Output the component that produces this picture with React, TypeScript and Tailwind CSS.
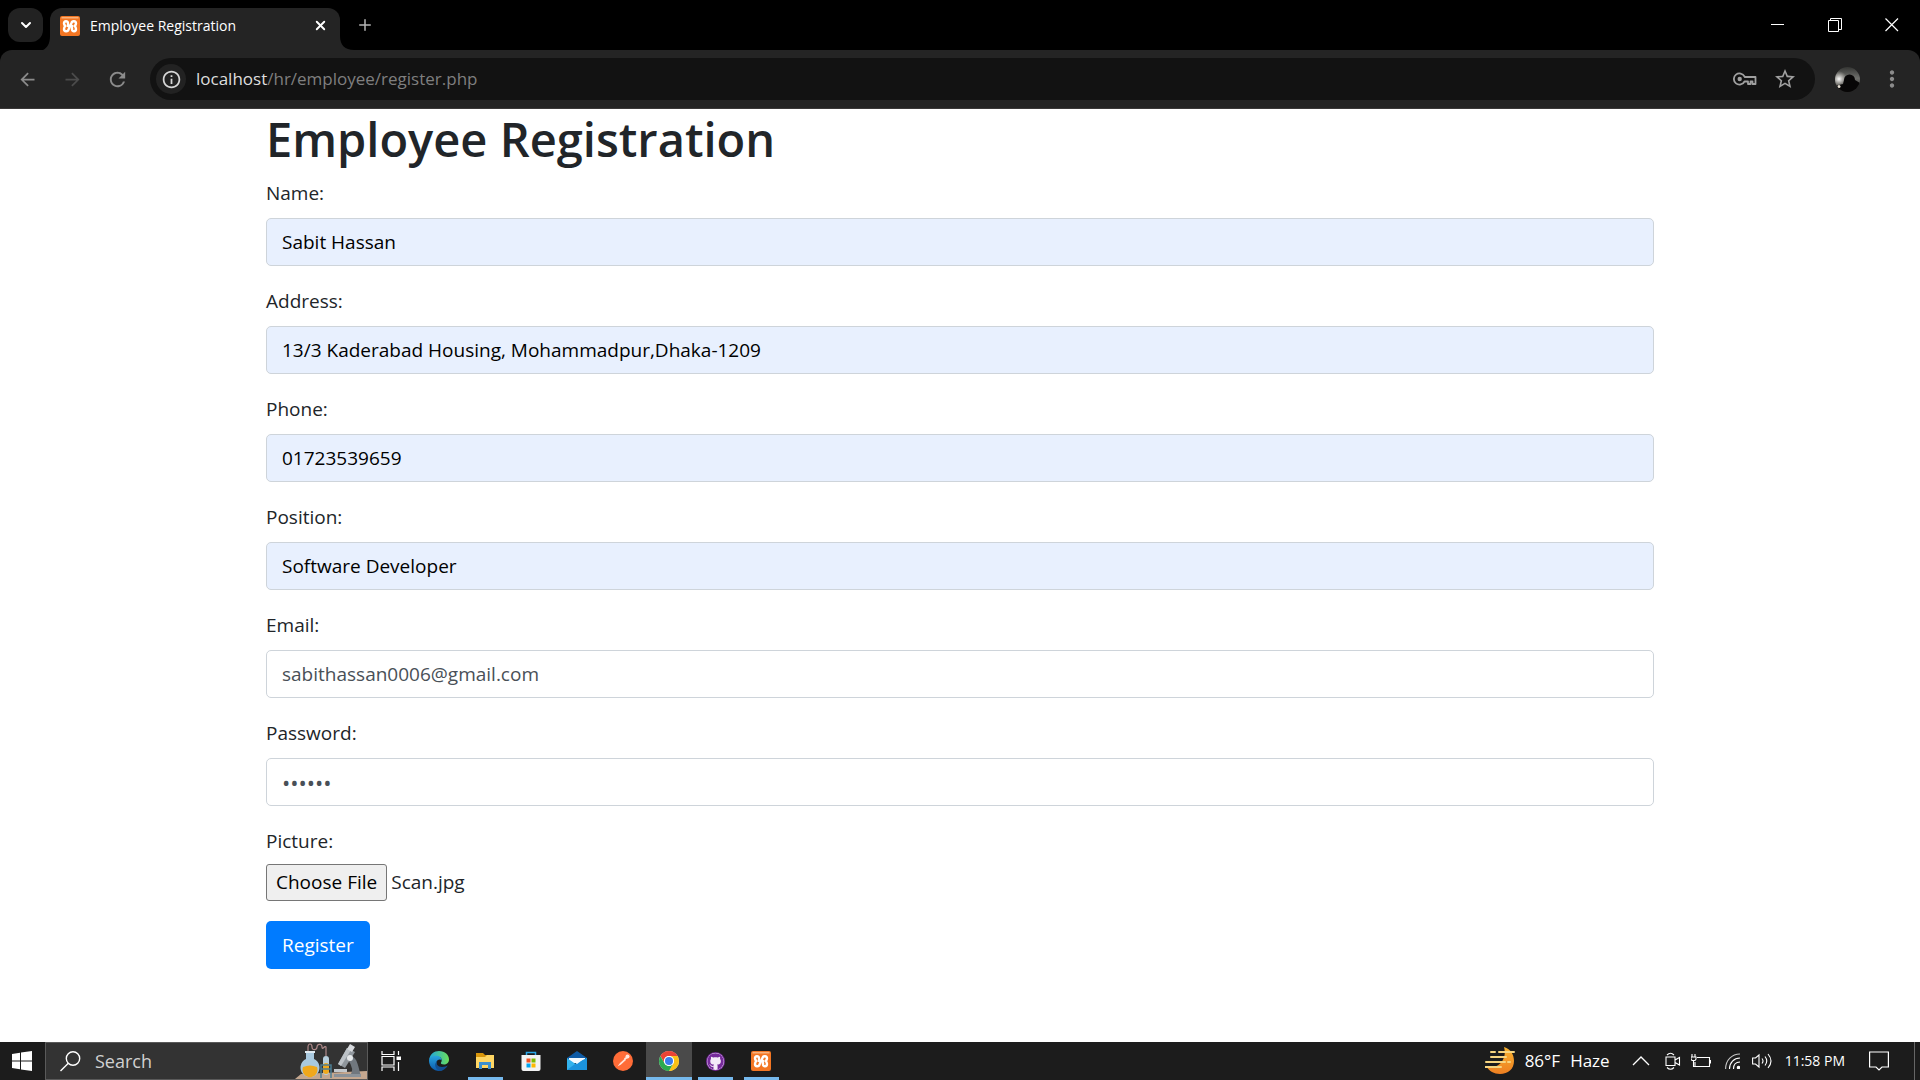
import { useEffect, useRef } from "react";
import type { ReactNode } from "react";
import { MdArrowBack, MdArrowForward, MdRefresh, MdInfoOutline, MdStarBorder, MdMoreVert } from "react-icons/md";
import { FaGithub } from "react-icons/fa";
import { ChevronDown, Plus, X } from "lucide-react";

function XamppIcon() {
  return (
    <svg width="20" height="20" viewBox="0 0 20 20" aria-hidden="true">
      <rect width="20" height="20" rx="2" fill="#f37623" />
      <path d="M1.500 1H18.500V2.500H1.500Z" fill="#f9b27c" />
      <g fill="none" stroke="#fff" strokeWidth="2.400" strokeLinecap="round" strokeLinejoin="round">
        <path d="M8 8.500V7.200C8 4.600 4 4.600 4 7.500 4 9 5.500 10 5.500 10S4 11 4 13C4 16 8 16 8.500 13.500L11.500 7C12 4.600 16 4.600 16 7.500 16 9 14.500 10 14.500 10S16 11 16 13C16 16 12 16 12 13.500V12" />
        <path d="M8 10H12" />
      </g>
    </svg>
  );
}

function TabStrip() {
  return (
    <div className="flex h-[50px] items-start bg-black pl-2">
      <button aria-label="Search tabs" className="mt-2 flex h-[34px] w-[35px] items-center justify-center rounded-xl bg-[#222222] text-white">
        <ChevronDown size={16} strokeWidth={3} />
      </button>
      <div className="flex grow">
        <div className="flex items-end">
          <svg className="mt-9 h-3.5 w-[7px]" viewBox="0 0 7 14" aria-hidden="true">
            <path d="M7 0C7 8 4 12 0 14H7Z" fill="#242424" />
          </svg>
          <div className="mt-2 flex h-[42px] w-[290px] items-center rounded-t-xl bg-[#242424] pr-2.5 pb-[7px] pl-2.5">
            <XamppIcon />
            <span className="ml-2.5 text-sm text-white">Employee Registration</span>
            <button aria-label="Close tab" className="ml-auto flex size-5 items-center justify-center text-white">
              <X size={15} strokeWidth={3} />
            </button>
          </div>
          <svg className="h-3.5 w-3.5" viewBox="0 0 14 14" aria-hidden="true">
            <path d="M0 0C0 9 5 14 14 14H0Z" fill="#242424" />
          </svg>
        </div>
        <button aria-label="New tab" className="mt-2 flex h-[34px] w-[22px] items-center justify-center text-[#b4b4b4]">
          <Plus size={18} />
        </button>
      </div>
      <div className="flex text-white">
        <button aria-label="Minimize" className="flex h-[50px] w-[57px] items-center justify-center">
          <svg width="14" height="14" viewBox="0 0 14 14"><path d="M0 6.500H13" stroke="currentColor" /></svg>
        </button>
        <button aria-label="Restore" className="flex h-[50px] w-[57px] items-center justify-center">
          <svg width="14" height="14" viewBox="0 0 14 14" fill="none" stroke="currentColor"><path d="M.5 2.500H10.500V13.500H.5ZM2.500 2.500V.5H13.500V11.500H10.500" /></svg>
        </button>
        <button aria-label="Close" className="flex h-[50px] w-[57px] items-center justify-center">
          <svg width="14" height="14" viewBox="0 0 14 14" stroke="currentColor" strokeWidth="1.200"><path d="M.5.5 13 13M13 .5.5 13" /></svg>
        </button>
      </div>
    </div>
  );
}

function Toolbar() {
  return (
    <div className="bg-black">
      <div className="flex h-[59px] items-center rounded-t-xl border-b border-[#3a3838] bg-[#242424] pl-[5px] text-[#8b8b8b]">
        <button aria-label="Back" className="flex w-[45px] justify-center"><MdArrowBack size={21} /></button>
        <button aria-label="Forward" className="flex w-[45px] justify-center text-[#4b4b4b]"><MdArrowForward size={21} /></button>
        <button aria-label="Reload" className="flex w-[45px] justify-center"><MdRefresh size={23} /></button>
        <div className="ml-2.5 flex h-[42px] grow items-center rounded-full bg-[#121212] pr-[18px] pl-1.5">
          <button aria-label="View site information" className="flex size-[30px] items-center justify-center rounded-full bg-[#222222] text-[#d6d6d6]">
            <MdInfoOutline size={21} />
          </button>
          <p className="ml-2.5 grow text-[17px] text-[#7f7f7f]">
            <span className="text-[#dedede]">localhost</span>/hr/employee/register.php
          </p>
          <button aria-label="Passwords" className="text-[#a0a0a0]">
            <svg width="24" height="14" viewBox="0 0 24 14" fill="none" stroke="currentColor" strokeWidth="1.800">
              <path d="M11.500 4.500A5.600 5.600 0 1 0 11.500 9.500H15V12H17.500V9.500H19.500V12H22.500V5H11.700Z" strokeLinejoin="round" />
              <circle cx="6.700" cy="7" r="2.200" fill="currentColor" stroke="none" />
            </svg>
          </button>
          <button aria-label="Bookmark this tab" className="ml-4 text-[#a0a0a0]"><MdStarBorder size={24} /></button>
        </div>
        <button aria-label="Profile" className="ml-5">
          <svg width="25" height="25" viewBox="0 0 25 25">
            <defs>
              <clipPath id="avatar"><circle cx="12.500" cy="12.500" r="12.500" /></clipPath>
              <linearGradient id="sky" x1="0" y1="0" x2="0" y2="1"><stop offset="0" stopColor="#343533" /><stop offset=".45" stopColor="#6f706c" /><stop offset="1" stopColor="#1a1816" /></linearGradient>
              <radialGradient id="glow"><stop offset="0" stopColor="#fff" /><stop offset="1" stopColor="#c9c5bc" stopOpacity="0" /></radialGradient>
            </defs>
            <g clipPath="url(#avatar)">
              <rect width="25" height="25" fill="url(#sky)" />
              <circle cx="4" cy="12" r="8" fill="url(#glow)" />
              <path d="M0 19 8 17 9 13A5.500 5.500 0 0 1 20 13L25 16V25H0Z" fill="#070606" />
              <circle cx="4" cy="19.500" r="1.500" fill="#e9e2d6" />
            </g>
          </svg>
        </button>
        <button aria-label="Menu" className="mr-[15px] ml-[19px]"><MdMoreVert size={26} /></button>
      </div>
    </div>
  );
}

type FieldProps = { id: string; label: string; value: string; type?: string; filled?: boolean };

function Field({ id, label, value, type = "text", filled = false }: FieldProps) {
  return (
    <div className="mb-5">
      <label htmlFor={id} className="mb-2.5 block leading-[30px]">{label}</label>
      <input
        id={id}
        type={type}
        defaultValue={value}
        className={`block h-12 w-full rounded-[5px] border border-[#ced4da] px-[15px] ${type === "password" ? "text-[22px]" : ""} ${filled ? "bg-[#e8f0fe] text-black" : "bg-white text-[#495057]"}`}
      />
    </div>
  );
}

function RegistrationForm() {
  const picture = useRef<HTMLInputElement>(null);
  useEffect(() => {
    const transfer = new DataTransfer();
    transfer.items.add(new File(["scan"], "Scan.jpg", { type: "image/jpeg" }));
    if (picture.current) picture.current.files = transfer.files;
  }, []);
  return (
    <main className="grow bg-white">
      <div className="mx-auto w-full max-w-[1388px] pb-8 text-[19px] text-[#212529]">
        <h1 className="mb-2 text-[47px] leading-[61px] font-semibold">Employee Registration</h1>
        <form onSubmit={(e) => e.preventDefault()}>
          <Field id="name" label="Name:" value="Sabit Hassan" filled />
          <Field id="address" label="Address:" value="13/3 Kaderabad Housing, Mohammadpur,Dhaka-1209" filled />
          <Field id="phone" label="Phone:" value="01723539659" filled />
          <Field id="position" label="Position:" value="Software Developer" filled />
          <Field id="email" label="Email:" type="email" value="sabithassan0006@gmail.com" />
          <Field id="password" label="Password:" type="password" value="secret" />
          <label htmlFor="picture" className="mb-2 block leading-[30px]">Picture:</label>
          <input
            ref={picture}
            id="picture"
            type="file"
            className="mb-5 block h-[37px] w-full file:mr-1 file:h-[37px] file:rounded-[3px] file:border file:border-solid file:border-[#767676] file:bg-[#efefef] file:px-[9px] file:text-black"
          />
          <button type="submit" className="h-12 rounded-[5px] bg-[#007bff] px-4 text-white">Register</button>
        </form>
      </div>
    </main>
  );
}

function TaskButton({ label, active = false, open = false, children }: { label: string; active?: boolean; open?: boolean; children: ReactNode }) {
  return (
    <button aria-label={label} className={`flex h-[38px] w-[46px] flex-col items-center ${active ? "bg-[#4a4a4a]" : ""}`}>
      <span className="flex h-[35px] items-center pt-[3px]">{children}</span>
      {(open || active) && <span className={`h-[3px] bg-[#76b9ed] ${active ? "w-full" : "w-[35px]"}`} />}
    </button>
  );
}

function SearchArt() {
  return (
    <svg className="ml-auto" width="72" height="36" viewBox="0 0 72 36" aria-hidden="true">
      <path d="M0 36 6 31 72 28V36Z" fill="#c4a78f" />
      <path d="M13 8V4C13 0 17 0 17 4S22 7 22 4 27 0 27 4 30 2 31 4V13" fill="none" stroke="#b08b8b" strokeWidth="1.200" />
      <path d="M11 8H19V16A9.500 9.500 0 1 1 11 16Z" fill="#a9c9df" />
      <path d="M8 24A7.500 7.500 0 1 0 22 24Q15 21 8 24Z" fill="#f0a81c" />
      <path d="M10 8H20V10H10Z" fill="#dfeaf1" />
      <rect x="28" y="13" width="6" height="19" rx="3" fill="#b7cfdd" />
      <rect x="28" y="20" width="6" height="11" rx="3" fill="#f0a81c" />
      <path d="M26 35V22H36V35M26 26H36" fill="none" stroke="#4c7d92" strokeWidth="1.500" />
      <path d="M52 5 60 9 50 25 43 21Z" fill="#8f969c" />
      <path d="M52 5 56 7 46 23 43 21Z" fill="#bcc2c7" />
      <path d="M55 1 60 4 57 9 52 6Z" fill="#d7dade" />
      <path d="M56 13C63 15 63 24 66 33H55Q60 26 53 17Z" fill="#70777e" />
      <circle cx="55" cy="15" r="3" fill="#e5e8ea" />
      <path d="M39 26H52V29H39Z" fill="#c3c8cc" />
      <path d="M39 31H66V34H39Z" fill="#8a9299" />
    </svg>
  );
}

function Taskbar() {
  return (
    <footer className="flex h-[38px] items-stretch bg-[#1c1c1c] text-white">
      <button aria-label="Start" className="flex w-[45px] items-center justify-center pr-px">
        <svg width="20" height="20" viewBox="0 0 20 20" fill="#fff"><path d="M0 3 8 1.800V9.500H0ZM9 1.600 20 0V9.500H9ZM0 10.500H8V18.200L0 17ZM9 10.500H20V20L9 18.400Z" /></svg>
      </button>
      <label className="flex w-[323px] items-center border border-[#5a5a5a] bg-[#333333] pl-3.5">
        <svg width="21" height="21" viewBox="0 0 21 21" fill="none" stroke="#fff" strokeWidth="1.400"><circle cx="13" cy="7.500" r="6.700" /><path d="M8.300 12.300.5 20" /></svg>
        <input type="text" aria-label="Search" placeholder="Search" className="ml-3.5 w-24 bg-transparent text-lg placeholder:text-[#d0d0d0]" />
        <SearchArt />
      </label>
      <div className="flex">
        <TaskButton label="Task View">
          <svg width="21" height="20" viewBox="0 0 21 20" fill="none" stroke="#fff" strokeWidth="1.200"><path d="M1 0V3.500H13V0M1 5.500H13V14H1ZM1 20V16H13V20M17.500 0V4M17.500 11V20" /><path d="M15.500 5.500H20V9H15.500Z" fill="#fff" stroke="none" /></svg>
        </TaskButton>
        <div className="flex pl-0.5">
          <TaskButton label="Microsoft Edge">
            <svg width="20" height="20" viewBox="0 0 20 20">
              <defs>
                <linearGradient id="edgeTop"><stop offset="0" stopColor="#1fa5dd" /><stop offset="1" stopColor="#6bdf5b" /></linearGradient>
                <linearGradient id="edgeSide" x1="0" y1="0" x2="0" y2="1"><stop offset="0" stopColor="#28a4df" /><stop offset="1" stopColor="#0b59ac" /></linearGradient>
              </defs>
              <path d="M0 9C1 3 5 0 10 0 16 0 20 4 20 8.500 20 12 17.500 13.500 15 13.500 12.500 13.500 11.500 12.500 12 11.500 14 8.500 12 5.500 8 5.500 4 5.500 1 7 0 9Z" fill="url(#edgeTop)" />
              <path d="M0 10C0 7 3 4.800 7 4.800 11 4.800 13 7.500 12.500 9.500 12 8.500 10 8 9 9 6 11 7 16 13 19.500A10 10 0 0 1 0 10Z" fill="url(#edgeSide)" />
              <path d="M8.500 9.500C6 13 9 16 13 16 15.500 16 17.500 15 18.800 14.500 17 18 13.500 20 10.500 20 6 18 4.500 12.500 8.500 9.500Z" fill="#124f91" />
            </svg>
          </TaskButton>
          <TaskButton label="File Explorer" open>
            <svg width="20" height="18" viewBox="0 0 20 18">
              <path d="M1 1H8L10 3H18V6H1Z" fill="#d9960b" /><path d="M1 5H10L12 3H19V16H1Z" fill="#ffd663" /><path d="M4 17V10H16V17H13V13H7V17Z" fill="#3b8fd0" />
            </svg>
          </TaskButton>
          <TaskButton label="Microsoft Store">
            <svg width="20" height="20" viewBox="0 0 20 20">
              <path d="M5.500 5V1.500H14.500V5" fill="none" stroke="#2aa7e8" strokeWidth="1.500" /><path d="M.5 4H19.500V18Q19.500 20 17.500 20H2.500Q.5 20 .5 18Z" fill="#f3f3f3" />
              <path d="M5.500 7.500H9.500V11.500H5.500Z" fill="#f25022" /><path d="M10.500 7.500H14.500V11.500H10.500Z" fill="#7fba00" /><path d="M5.500 12.500H9.500V16.500H5.500Z" fill="#00a4ef" /><path d="M10.500 12.500H14.500V16.500H10.500Z" fill="#ffb900" />
            </svg>
          </TaskButton>
          <TaskButton label="Mail">
            <svg width="20" height="20" viewBox="0 0 20 20"><path d="M0 7 10 0 20 7V10H0Z" fill="#0f5ba5" /><path d="M2 7H18V12H2Z" fill="#f5fbff" /><path d="M0 7 10 14 20 7V19H0Z" fill="#33b3ee" /><path d="M0 19 10 11.500 20 7V19Z" fill="#1b93dd" /><path d="M2 7H18L10 13Z" fill="#f5fbff" /></svg>
          </TaskButton>
          <TaskButton label="Postman">
            <svg width="20" height="20" viewBox="0 0 20 20"><circle cx="10" cy="10" r="10" fill="#ff6c37" /><path d="M4.500 15.500 7 12 12 7.500 13 9 8 13.500Z" fill="#ffe6dc" /><path d="M11.500 8 14 6.500" stroke="#ffe6dc" strokeWidth="2" /><circle cx="14.500" cy="5.500" r="2" fill="#ffe6dc" /></svg>
          </TaskButton>
          <TaskButton label="Google Chrome" active>
            <svg width="20" height="20" viewBox="0 0 20 20">
              <circle cx="10" cy="10" r="10" fill="#fff" />
              <path d="M1.340 5A10 10 0 0 1 18.660 5H10A5 5 0 0 0 5.670 12.500Z" fill="#ea4335" />
              <path d="M18.660 5A10 10 0 0 1 10 20L14.330 12.500A5 5 0 0 0 10 5Z" fill="#fbc116" />
              <path d="M10 20A10 10 0 0 1 1.340 5L5.670 12.500A5 5 0 0 0 14.330 12.500Z" fill="#2ca94f" />
              <circle cx="10" cy="10" r="5" fill="#fff" /><circle cx="10" cy="10" r="4" fill="#3a7cec" />
            </svg>
          </TaskButton>
          <TaskButton label="GitHub Desktop" open>
            <span className="flex size-[19px] items-center justify-center rounded-full bg-[#762a9b]">
              <FaGithub className="size-[17px] rounded-full bg-[#f4ecf8] text-[#762a9b]" />
            </span>
          </TaskButton>
          <TaskButton label="XAMPP" open><XamppIcon /></TaskButton>
        </div>
      </div>
      <button aria-label="Weather" className="ml-auto flex items-center text-[17px]">
        <svg width="30" height="28" viewBox="0 0 30 28">
          <defs><linearGradient id="moon" x1="0" y1="0" x2="0" y2="1"><stop offset="0" stopColor="#f9b32f" /><stop offset="1" stopColor="#ee7f22" /></linearGradient></defs>
          <path d="M19 0C26 2 29 8 29 14 29 22 23 27 15 27 9 27 4 24 2 20 11 23 23 14 19 0Z" fill="url(#moon)" />
          <path d="M6 5H10M14 5H29M6 10H21M1 15H20M23 15H25M3 20H9M0 20H16" stroke="#f7d580" strokeWidth="2" strokeLinecap="round" />
        </svg>
        <span className="ml-2.5">86°F</span>
        <span className="ml-2.5">Haze</span>
      </button>
      <div className="ml-[22px] flex items-center">
        <button aria-label="Show hidden icons">
          <svg width="18" height="10" viewBox="0 0 18 10" fill="none" stroke="#fff" strokeWidth="1.300"><path d="M1 9 9 1 17 9" /></svg>
        </button>
        <button aria-label="Meet Now" className="ml-[15px]">
          <svg width="16" height="18" viewBox="0 0 16 18" fill="none" stroke="#fff" strokeWidth="1.100"><path d="M1 5H10V13.500H1ZM10 8 14.500 5.500V13L10 10.500M2 3Q5.500-.5 9 3M2 15.500Q5.500 19 9 15.500" /></svg>
        </button>
        <button aria-label="Battery" className="ml-2.5">
          <svg width="20" height="14" viewBox="0 0 20 14" fill="none" stroke="#fff" strokeWidth="1.100"><path d="M6 3.500H18.500V12.500H4V8M18.500 6.500H19.500V9.500M1 0V3M4 0V3M0 3H5V5L4 6.500H1L0 5ZM2.500 6.500V12.500H4" /></svg>
        </button>
        <button aria-label="Network" className="ml-3.5">
          <svg width="15" height="16" viewBox="0 0 15 16" fill="none" stroke="#fff" strokeWidth="1.100"><path d="M.6 16C.6 7 7 1 15 1" opacity=".75" /><path d="M4.500 16C4.500 9.500 9 5 15 5M8.500 16C8.500 11.500 11 9 15 9" /><circle cx="13.500" cy="14.500" r="1.200" fill="#fff" /></svg>
        </button>
        <button aria-label="Volume" className="ml-3">
          <svg width="21" height="18" viewBox="0 0 21 18" fill="none" stroke="#fff" strokeWidth="1.100"><path d="M.6 6H3.500L7 3V15L3.500 12H.6ZM10 6.500Q12 9 10 11.500M13 4.500Q16.500 9 13 13.500M16 2Q22 9 16 16" /></svg>
        </button>
        <time className="ml-3 text-sm">11:58 PM</time>
        <button aria-label="Notifications" className="ml-6">
          <svg width="20" height="20" viewBox="0 0 20 20" fill="none" stroke="#fff" strokeWidth="1.200"><path d="M.6 1H19.400V16H13L10 19 7 16H.6Z" /></svg>
        </button>
        <button aria-label="Show desktop" className="ml-[25px] h-[38px] w-1.5 border-l border-[#666666]" />
      </div>
    </footer>
  );
}

export default function App() {
  return (
    <div className="flex min-h-screen flex-col bg-white font-['Open_Sans','Noto_Sans',sans-serif]">
      <header>
        <TabStrip />
        <Toolbar />
      </header>
      <RegistrationForm />
      <Taskbar />
    </div>
  );
}
